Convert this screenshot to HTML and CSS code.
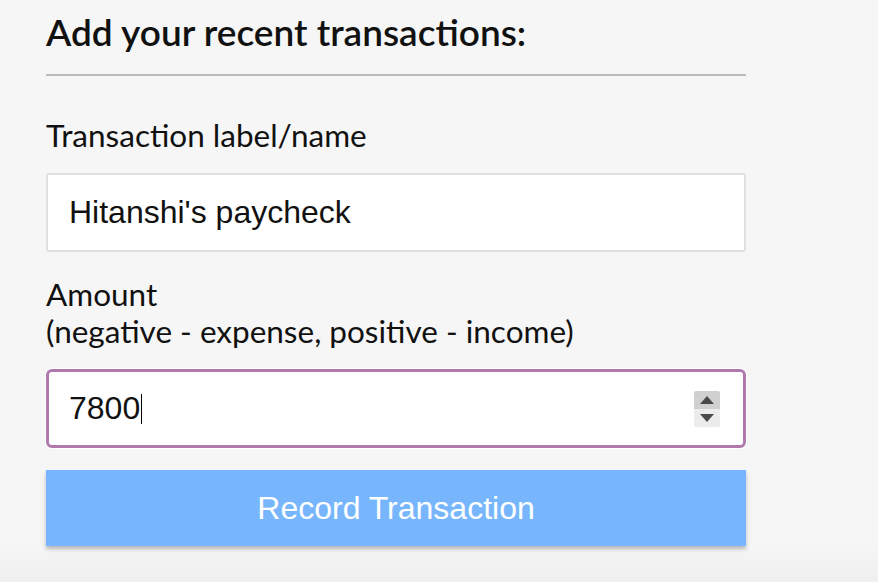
FILE: index.html
```html
<!DOCTYPE html>
<html>
<head>
<meta charset="utf-8">
<link rel="stylesheet" href="styles.css">
</head>
<body>
<div class="panel">
  <h3 class="title">Add your recent transactions:</h3>
  <div class="rule"></div>
  <form class="form">
    <div class="field">
      <label class="label" for="name">Transaction label/name</label>
      <div class="input">Hitanshi's paycheck</div>
    </div>
    <div class="field">
      <label class="label" for="amount">Amount<br>(negative - expense, positive - income)</label>
      <div class="input input-focus">
        <span class="value">7800<span class="caret"></span></span>
        <span class="spinner">
          <span class="spin-up"><svg width="14" height="8" viewBox="0 0 14 8"><path d="M7 0 L14 8 L0 8 Z" fill="#4a4a4a"/></svg></span>
          <span class="spin-down"><svg width="14" height="8" viewBox="0 0 14 8"><path d="M0 0 L14 0 L7 8 Z" fill="#4a4a4a"/></svg></span>
        </span>
      </div>
    </div>
    <button type="button" class="btn">Record Transaction</button>
  </form>
</div>
</body>
</html>
```
FILE: styles.css
```css
html, body {
  margin: 0;
  padding: 0;
}
body {
  background: linear-gradient(to bottom, #f6f6f6 0, #f6f6f6 540px, #efefef 582px);
  min-height: 582px;
  font-family: Lato, "Open Sans", sans-serif;
  color: #111;
}
.panel {
  width: 700px;
  padding: 12px 0 0 46px;
}
.title {
  margin: 0;
  font-size: 37px;
  font-weight: 600;
  line-height: 40px;
  color: #111;
}
.rule {
  margin-top: 22px;
  height: 2px;
  background: #bcbcbc;
}
.form {
  display: flex;
  flex-direction: column;
  padding-top: 41px;
}
.field {
  display: flex;
  flex-direction: column;
}
.label {
  font-size: 31.5px;
  line-height: 37px;
  color: #111;
}
.input {
  box-sizing: border-box;
  height: 79px;
  margin-top: 19px;
  margin-bottom: 24px;
  background: #fff;
  border: 2px solid #e0e0e0;
  border-radius: 3px;
  padding: 0 21px;
  display: flex;
  align-items: center;
  font-family: "Liberation Sans", Arial, sans-serif;
  font-size: 32px;
  color: #111;
}
.input-focus {
  border: 3px solid #b07aae;
  border-radius: 6px;
  box-shadow: 0 0 0 1px #fff;
  margin-top: 19px;
  margin-bottom: 22px;
  justify-content: space-between;
  padding-left: 20px;
  padding-right: 23px;
}
.value {
  display: inline-flex;
  align-items: center;
}
.caret {
  display: inline-block;
  width: 1px;
  height: 30px;
  background: #000;
  margin-left: 1px;
}
.spinner {
  display: flex;
  flex-direction: column;
  width: 26px;
  height: 36px;
  border-radius: 2px;
  overflow: hidden;
}
.spin-up, .spin-down {
  flex: 1;
  display: flex;
  align-items: center;
  justify-content: center;
}
.spin-up { background: #d0d0d0; }
.spin-down { background: #ececec; }
.btn {
  height: 76px;
  border: none;
  background: #77b6fd;
  color: #fff;
  font-family: "Liberation Sans", Arial, sans-serif;
  font-size: 32px;
  box-shadow: 0 3px 4px rgba(0, 0, 0, 0.25);
  padding: 0;
}
```
